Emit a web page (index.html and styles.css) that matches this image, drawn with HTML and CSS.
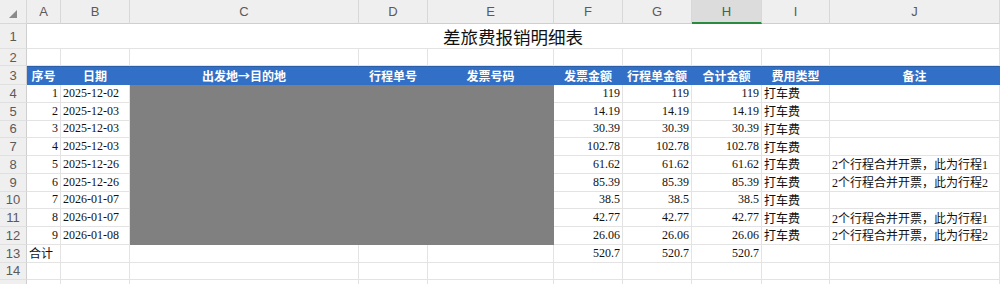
FILE: index.html
```html
<!DOCTYPE html>
<html lang="zh">
<head>
<meta charset="utf-8">
<title>差旅费报销明细表</title>
<link rel="stylesheet" href="styles.css">
</head>
<body>
<div class="sheet">
  <div class="hd corner"><svg width="8" height="8" viewBox="0 0 8 8"><polygon points="8,0 8,8 0,8" fill="#8a8a8a"/></svg></div>
  <div class="hd col">A</div>
  <div class="hd col">B</div>
  <div class="hd col">C</div>
  <div class="hd col">D</div>
  <div class="hd col">E</div>
  <div class="hd col">F</div>
  <div class="hd col">G</div>
  <div class="hd col sel">H</div>
  <div class="hd col">I</div>
  <div class="hd col">J</div>

  <div class="hd rn">1</div>
  <div class="c title">差旅费报销明细表</div>

  <div class="hd rn">2</div>
  <div class="c"></div><div class="c"></div><div class="c"></div><div class="c"></div><div class="c"></div><div class="c"></div><div class="c"></div><div class="c"></div><div class="c"></div><div class="c"></div>

  <div class="hd rn">3</div>
  <div class="c th">序号</div>
  <div class="c th">日期</div>
  <div class="c th">出发地→目的地</div>
  <div class="c th">行程单号</div>
  <div class="c th">发票号码</div>
  <div class="c th">发票金额</div>
  <div class="c th">行程单金额</div>
  <div class="c th">合计金额</div>
  <div class="c th">费用类型</div>
  <div class="c th">备注</div>

  <div class="hd rn">4</div>
  <div class="c r">1</div><div class="c">2025-12-02</div>
  <div class="mask"></div>
  <div class="c r">119</div><div class="c r">119</div><div class="c r">119</div><div class="c">打车费</div><div class="c"></div>

  <div class="hd rn">5</div>
  <div class="c r">2</div><div class="c">2025-12-03</div>
  <div class="c r">14.19</div><div class="c r">14.19</div><div class="c r">14.19</div><div class="c">打车费</div><div class="c"></div>

  <div class="hd rn">6</div>
  <div class="c r">3</div><div class="c">2025-12-03</div>
  <div class="c r">30.39</div><div class="c r">30.39</div><div class="c r">30.39</div><div class="c">打车费</div><div class="c"></div>

  <div class="hd rn">7</div>
  <div class="c r">4</div><div class="c">2025-12-03</div>
  <div class="c r">102.78</div><div class="c r">102.78</div><div class="c r">102.78</div><div class="c">打车费</div><div class="c"></div>

  <div class="hd rn">8</div>
  <div class="c r">5</div><div class="c">2025-12-26</div>
  <div class="c r">61.62</div><div class="c r">61.62</div><div class="c r">61.62</div><div class="c">打车费</div><div class="c">2个行程合并开票，此为行程1</div>

  <div class="hd rn">9</div>
  <div class="c r">6</div><div class="c">2025-12-26</div>
  <div class="c r">85.39</div><div class="c r">85.39</div><div class="c r">85.39</div><div class="c">打车费</div><div class="c">2个行程合并开票，此为行程2</div>

  <div class="hd rn">10</div>
  <div class="c r">7</div><div class="c">2026-01-07</div>
  <div class="c r">38.5</div><div class="c r">38.5</div><div class="c r">38.5</div><div class="c">打车费</div><div class="c"></div>

  <div class="hd rn">11</div>
  <div class="c r">8</div><div class="c">2026-01-07</div>
  <div class="c r">42.77</div><div class="c r">42.77</div><div class="c r">42.77</div><div class="c">打车费</div><div class="c">2个行程合并开票，此为行程1</div>

  <div class="hd rn">12</div>
  <div class="c r">9</div><div class="c">2026-01-08</div>
  <div class="c r">26.06</div><div class="c r">26.06</div><div class="c r">26.06</div><div class="c">打车费</div><div class="c">2个行程合并开票，此为行程2</div>

  <div class="hd rn">13</div>
  <div class="c">合计</div><div class="c"></div><div class="c"></div><div class="c"></div><div class="c"></div>
  <div class="c r">520.7</div><div class="c r">520.7</div><div class="c r">520.7</div><div class="c"></div><div class="c"></div>

  <div class="hd rn">14</div>
  <div class="c"></div><div class="c"></div><div class="c"></div><div class="c"></div><div class="c"></div><div class="c"></div><div class="c"></div><div class="c"></div><div class="c"></div><div class="c"></div>

  <div class="hd rn"></div>
  <div class="c"></div><div class="c"></div><div class="c"></div><div class="c"></div><div class="c"></div><div class="c"></div><div class="c"></div><div class="c"></div><div class="c"></div><div class="c"></div>
</div>
</body>
</html>
```

FILE: styles.css
```css
html, body {
  margin: 0;
  padding: 0;
  background: #ffffff;
  overflow: hidden;
}

.sheet {
  display: grid;
  grid-template-columns: 27px 34px 69px 229px 69px 126px 69px 69px 70px 68px 170px;
  grid-template-rows: 24px 25px 17px 19px repeat(9, 17.75px) 17.75px 17.75px 5px;
  width: 1000px;
  font-family: "Liberation Serif", "Noto Sans CJK SC", serif;
  font-size: 12px;
  color: #111;
}

.hd {
  background: #efefef;
  color: #5a5a5a;
  font-family: "Liberation Sans", Arial, sans-serif;
  font-size: 13px;
  display: flex;
  align-items: center;
  justify-content: center;
  box-sizing: border-box;
  border-right: 1px solid #d8d8d8;
  border-bottom: 1px solid #d8d8d8;
}

.corner {
  justify-content: flex-start;
  align-items: flex-start;
  padding: 10px 0 0 9px;
}

.col {
  border-bottom: 1px solid #cfcfcf;
}

.col.sel {
  background: #dcdcdc;
  color: #2c6e49;
  border-bottom: 2px solid #2a8a3e;
}

.rn {
  border-right: 1px solid #cfcfcf;
  border-bottom: 1px solid #e0e0e0;
}

.c {
  box-sizing: border-box;
  border-right: 1px solid #e3e3e3;
  border-bottom: 1px solid #e3e3e3;
  display: flex;
  align-items: center;
  padding: 0 2px;
  white-space: nowrap;
  overflow: visible;
}

.c.r {
  justify-content: flex-end;
}

.title {
  grid-column: span 10;
  justify-content: center;
  font-family: "Noto Sans CJK SC", serif;
  font-size: 17.5px;
  color: #111;
}

.th {
  background: #3170c6;
  border-right-color: #3170c6;
  border-bottom-color: #3170c6;
  border-top: 1px solid #2a5fa8;
  color: #ffffff;
  font-family: "Noto Sans CJK SC", sans-serif;
  font-weight: 700;
  font-size: 12px;
  justify-content: center;
}

.mask {
  grid-column: span 3;
  grid-row: span 9;
  background: #808080;
}
```
